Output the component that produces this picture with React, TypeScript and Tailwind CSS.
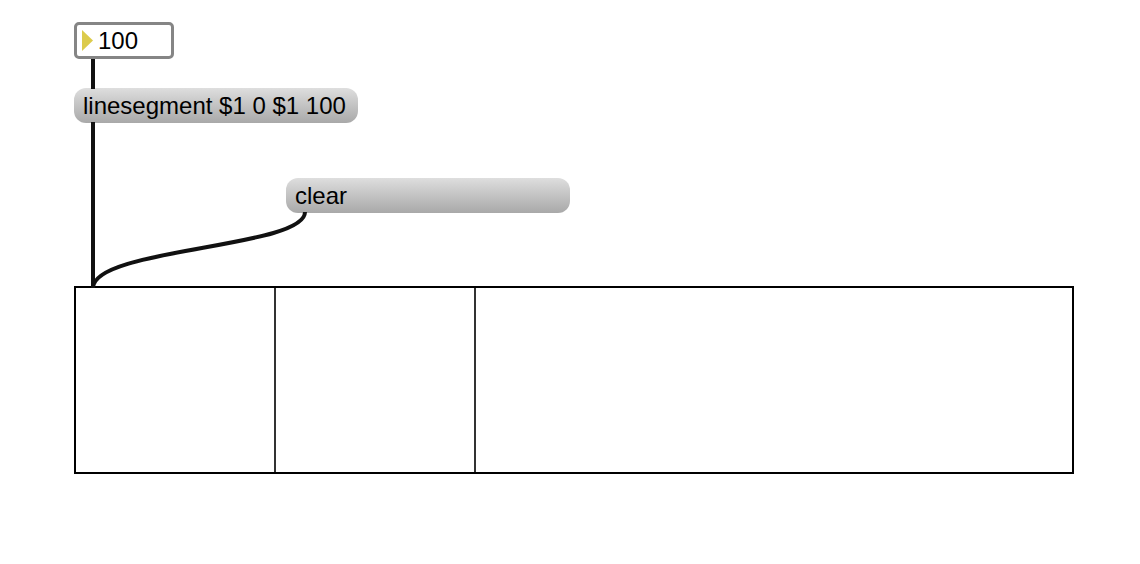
import React from 'react';

const font = { fontFamily: '"Liberation Sans", Arial, sans-serif' };

function MessageBox({ label, className = '' }: { label: string; className?: string }) {
  return (
    <div
      className={`flex items-center h-[35px] w-[284px] rounded-[12px] bg-gradient-to-b from-[#dedede] to-[#a9a9a9] pl-[9px] text-[24px] leading-none text-black ${className}`}
    >
      {label}
    </div>
  );
}

export default function App() {
  return (
    <div className="relative w-[1140px] h-[564px] bg-white overflow-hidden" style={font}>
      {/* patch cords sit over the canvas */}
      <svg className="absolute inset-0 pointer-events-none" width={1140} height={564}>
        <g stroke="#111" strokeWidth={4} fill="none" strokeLinecap="butt">
          <path d="M93 59 L93 89" />
          <path d="M93 122 L93 288" />
          <path d="M305 212 C305 248, 93 248, 93 288" />
        </g>
      </svg>

      <div className="flex flex-col items-start pl-[74px] pt-[22px]">
        {/* number box */}
        <div className="flex items-center h-[37px] w-[100px] rounded-[5px] border-[3px] border-[#858585] bg-white">
          <svg width={11} height={21} viewBox="0 0 11 21" className="ml-[5px]">
            <path d="M0 0 L11 10.5 L0 21 Z" fill="#dccb4c" />
          </svg>
          <span className="ml-[5px] text-[24px] leading-none text-black">100</span>
        </div>

        <MessageBox label="linesegment $1 0 $1 100" className="mt-[29px]" />
        <MessageBox label="clear" className="mt-[55px] ml-[212px]" />

        {/* multislider-like box with three panes */}
        <div className="mt-[73px] flex h-[188px] w-[1000px] border-2 border-black bg-white">
          <div className="w-[200px] border-r-2 border-[#333]" />
          <div className="w-[200px] border-r-2 border-[#333]" />
          <div className="flex-1" />
        </div>
      </div>
    </div>
  );
}
